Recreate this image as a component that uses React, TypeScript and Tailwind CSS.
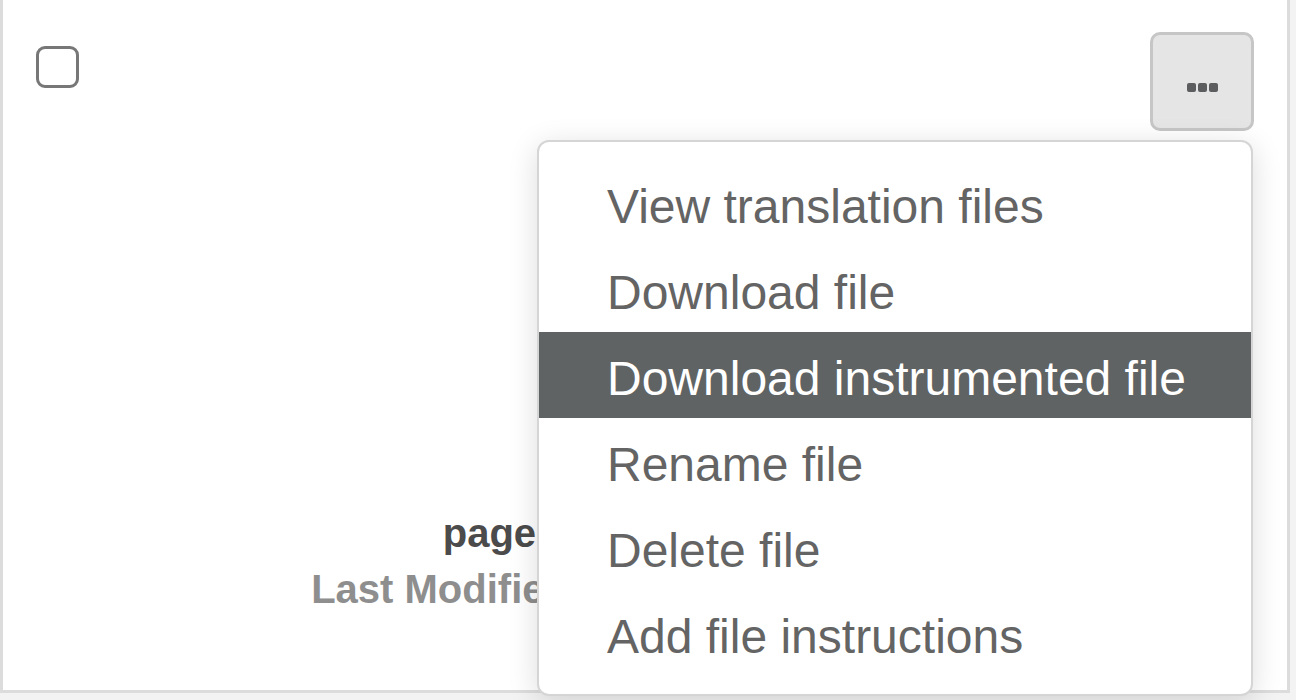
import React from 'react';

const items = [
  'View translation files',
  'Download file',
  'Download instrumented file',
  'Rename file',
  'Delete file',
  'Add file instructions',
];

export default function App() {
  const active = 2;

  return (
    <div className="h-[700px] w-[1296px] overflow-hidden bg-[#f3f3f3] font-['Liberation_Sans',Arial,sans-serif]">
      {/* File card */}
      <div className="relative flex h-[693px] w-[1290px] flex-col border-[3px] border-t-0 border-[#dcdcdc] bg-white">
        <div className="flex items-start justify-between px-[33px] pt-[32px]">
          <div className="mt-[14px] h-[42px] w-[43px] rounded-[9px] border-[3px] border-[#777777] bg-white" />
          <button className="flex h-[99px] w-[104px] items-center justify-center gap-[2px] rounded-[10px] border-[3px] border-[#c6c6c6] bg-[#e5e5e5] pt-[12px]">
            <span className="h-[9px] w-[9px] rounded-[2px] bg-[#5b5d5f]" />
            <span className="h-[9px] w-[9px] rounded-[2px] bg-[#5b5d5f]" />
            <span className="h-[9px] w-[9px] rounded-[2px] bg-[#5b5d5f]" />
          </button>
        </div>

        <div className="flex-1" />

        <div className="flex flex-col items-center pb-[73px] text-[40px] font-bold leading-[56px]">
          <span className="whitespace-nowrap text-[#4b4b4b]">page-translation.json</span>
          <span className="whitespace-nowrap text-[#8e8e8e]">Last Modified: 01/12/2024 10:45 AM</span>
        </div>

        {/* Actions menu */}
        <div className="absolute left-[534px] top-[140px] w-[716px] rounded-[12px] border-2 border-[#d5d5d5] bg-white py-[18px] shadow-[0_6px_30px_rgba(0,0,0,0.14)]">
          {items.map((label, i) => (
            <div
              key={label}
              className={
                i === active
                  ? 'h-[86px] whitespace-nowrap bg-[#5f6363] pl-[68px] pt-[8px] text-[48px] leading-[78px] text-white'
                  : 'h-[86px] whitespace-nowrap pl-[68px] pt-[8px] text-[48px] leading-[78px] text-[#646464]'
              }
            >
              {label}
            </div>
          ))}
        </div>
      </div>
    </div>
  );
}
